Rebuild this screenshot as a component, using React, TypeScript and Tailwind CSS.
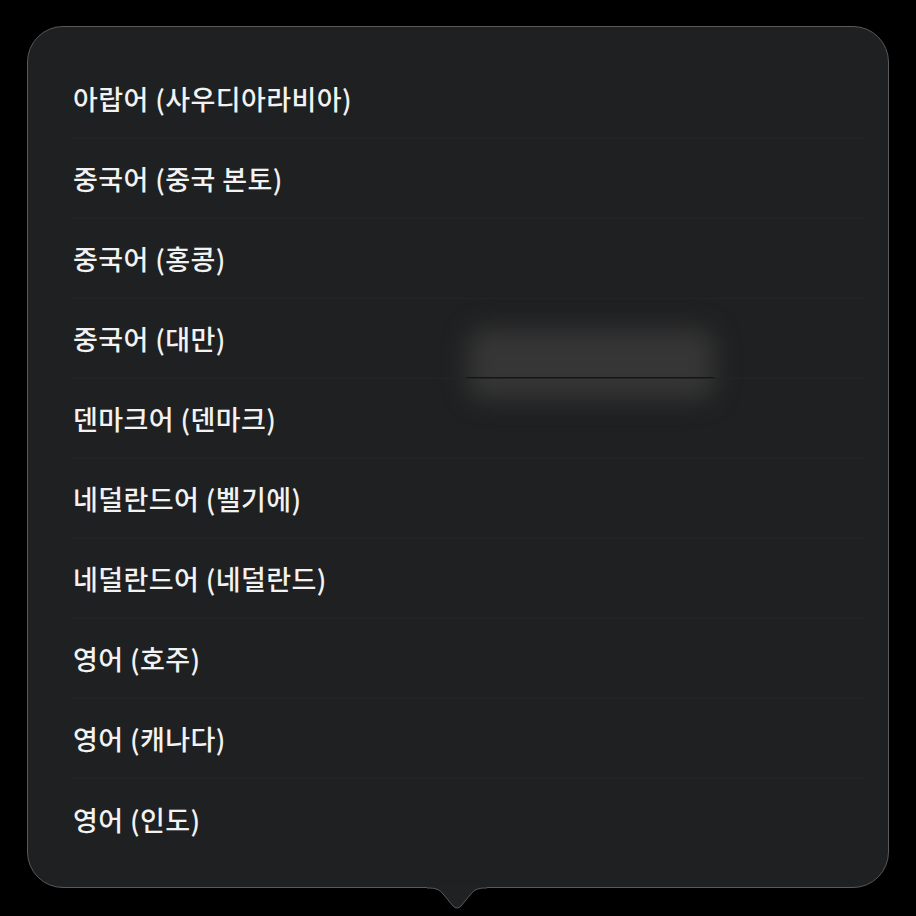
import React from "react";

const items = [
  "아랍어 (사우디아라비아)",
  "중국어 (중국 본토)",
  "중국어 (홍콩)",
  "중국어 (대만)",
  "덴마크어 (덴마크)",
  "네덜란드어 (벨기에)",
  "네덜란드어 (네덜란드)",
  "영어 (호주)",
  "영어 (캐나다)",
  "영어 (인도)",
];

export default function App() {
  return (
    <div className="min-h-[916px] w-[916px] bg-black pt-[26px] pl-[27px]">
      <div className="relative w-[862px] h-[862px] rounded-[36px] border border-[#5a5a5a] bg-[#1f2021]">
        {/* blurred artifact behind */}
        <div className="pointer-events-none absolute left-[440px] top-[302px] w-[246px] h-[70px] rounded-[16px] bg-[#363636] blur-[12px]" />
        <div className="pointer-events-none absolute left-[438px] top-[350px] w-[248px] h-[2px] bg-[#151515] blur-[0.6px]" />

        <div
          className="relative flex flex-col pt-[32px] pl-[45px] pr-[25px]"
          style={{ fontFamily: '"Noto Sans CJK KR", "Noto Sans", sans-serif' }}
        >
          {items.map((t, i) => (
            <div
              key={t}
              className={
                "h-[80px] flex items-center text-[27px] tracking-[0.4px] font-medium text-[#f2f2f2] " +
                (i < items.length - 1 ? "border-b border-[#232425]" : "")
              }
            >
              <span className="leading-none">{t}</span>
            </div>
          ))}
        </div>

        {/* arrow */}
        <svg
          className="absolute left-[399px] top-[859px]"
          width="60"
          height="26"
          viewBox="0 0 60 26"
        >
          <path
            d="M0 0 L0 2 C 9 2, 12 3, 17 9 L 26 20 Q 30 24 34 20 L 43 9 C 48 3, 51 2, 60 2 L60 0 Z"
            fill="#202123"
          />
          <path
            d="M0 2 C 9 2, 12 3, 17 9 L 26 20 Q 30 24 34 20 L 43 9 C 48 3, 51 2, 60 2"
            fill="none"
            stroke="#5a5a5a"
            strokeWidth="1"
          />
        </svg>
      </div>
    </div>
  );
}
